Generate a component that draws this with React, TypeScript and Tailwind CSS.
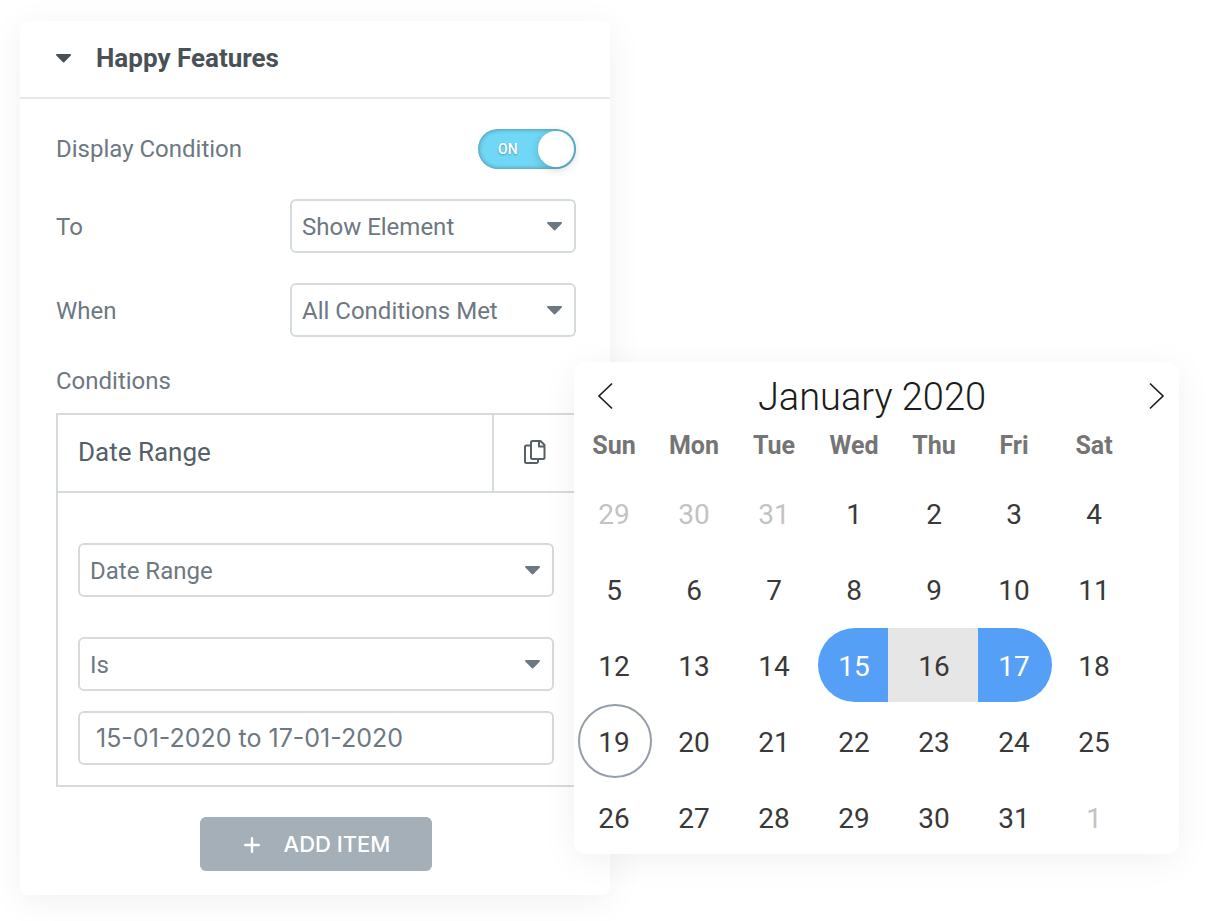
import React, { useState } from 'react';

const weekdays = ['Sun', 'Mon', 'Tue', 'Wed', 'Thu', 'Fri', 'Sat'];

// 29 Dec 2019 to 1 Feb 2020
const days = Array.from({ length: 35 }, (_, i) => new Date(2019, 11, 29 + i));

const Caret: React.FC<{ className?: string }> = ({ className = '' }) => (
  <svg className={`h-[9px] w-4 ${className}`} viewBox="0 0 16 9" fill="currentColor" aria-hidden="true">
    <path d="M.9 0h13.3c.7 0 1.1.9.6 1.4L8.5 8c-.5.6-1.3.6-1.8 0L.3 1.4C-.2.9.1 0 .9 0z" />
  </svg>
);

interface SelectProps {
  id: string;
  label: string;
  options: string[];
  className?: string;
}

const Select: React.FC<SelectProps> = ({ id, label, options, className = '' }) => (
  <div className={`relative ${className}`}>
    <select
      id={id}
      aria-label={label}
      className="h-[54px] w-full appearance-none rounded-md border-2 border-[#d5dadf] bg-white pt-0.5 pr-10 pl-2.5 text-2xl text-[#6d7882]"
    >
      {options.map((option) => (
        <option key={option}>{option}</option>
      ))}
    </select>
    <Caret className="pointer-events-none absolute top-[23px] right-[13px] text-[#6d7882]" />
  </div>
);

const Switch: React.FC = () => {
  const [on, setOn] = useState(true);

  return (
    <label className="relative block h-10 w-[98px] cursor-pointer">
      <input
        id="display-condition"
        type="checkbox"
        role="switch"
        checked={on}
        onChange={() => setOn(!on)}
        className="peer absolute inset-0 h-full w-full cursor-pointer appearance-none rounded-full bg-[#c2cbd2] shadow-[inset_0_0_5px_rgba(0,0,0,0.4)] checked:bg-[#71d7f7]"
      />
      <span className="pointer-events-none absolute inset-y-0 left-5 text-sm leading-10 font-medium text-white [text-shadow:0_1px_2px_rgba(0,0,0,0.3)]">
        {on ? 'ON' : ''}
      </span>
      <span className="pointer-events-none absolute top-0.5 left-0.5 h-9 w-9 rounded-full bg-white shadow-[0_2px_10px_rgba(0,0,0,0.2)] peer-checked:right-0.5 peer-checked:left-auto" />
    </label>
  );
};

const FeaturesPanel: React.FC = () => (
  <section className="min-w-0 flex-1 rounded-lg bg-white pb-6 shadow-[0_6px_36px_rgba(0,0,0,0.06)]">
    <button className="flex h-[78px] w-full items-center gap-6 border-b-2 border-[#e6e9ec] pb-0.5 pl-9 text-[26px] font-bold text-[#495157]">
      <Caret />
      <h2>Happy Features</h2>
    </button>

    <div className="pr-[34px] pl-9 text-2xl text-[#6d7882]">
      <div className="mt-[30px] flex items-center justify-between">
        <label htmlFor="display-condition">Display Condition</label>
        <Switch />
      </div>
      <div className="mt-[30px] flex items-center justify-between">
        <label htmlFor="to" className="pt-0.5">To</label>
        <Select id="to" label="To" options={['Show Element', 'Hide Element']} className="w-[286px]" />
      </div>
      <div className="mt-[30px] flex items-center justify-between">
        <label htmlFor="when" className="pt-0.5">When</label>
        <Select id="when" label="When" options={['All Conditions Met', 'Any Condition Met']} className="w-[286px]" />
      </div>

      <h3 className="mt-7">Conditions</h3>
      <div className="mt-4 border-2 border-[#d5dadf]">
        <div className="flex h-[78px] border-b-2 border-[#d5dadf] text-[26px] text-[#556068]">
          <button className="flex-1 border-r-2 border-[#d5dadf] pb-0.5 pl-5 text-left">Date Range</button>
          <button className="w-20 shrink-0 pb-0.5 pl-[30px]" aria-label="Duplicate">
            <svg className="h-6 w-[22px]" viewBox="0 0 22 24" fill="none" stroke="currentColor" strokeWidth="2" strokeLinejoin="round">
              <path d="M7 5.5H2.5A1.5 1.5 0 0 0 1 7v14.5A1.5 1.5 0 0 0 2.500 23h10a1.500 1.500 0 0 0 1.500-1.500V19" />
              <path d="M8.500 1H16.500L20.500 5V17.500A1.500 1.500 0 0 1 19 19H8.500A1.500 1.500 0 0 1 7 17.500V2.500A1.500 1.500 0 0 1 8.500 1z" />
              <path d="M15 1.500V6.500h5" />
            </svg>
          </button>
        </div>
        <div className="px-5 pt-[50px] pb-5">
          <Select id="type" label="Condition type" options={['Date Range', 'Date', 'Time']} />
          <Select id="operator" label="Operator" options={['Is', 'Is Not']} className="mt-10" />
          <input
            type="text"
            aria-label="Dates"
            defaultValue="15-01-2020 to 17-01-2020"
            className="mt-5 block h-[54px] w-full rounded-md border-2 border-[#d5dadf] px-4 font-[Inter] text-[25px] text-[#6d7882]"
          />
        </div>
      </div>

      <button className="mx-auto mt-[30px] flex h-[54px] w-[232px] items-center justify-center gap-6 rounded-md bg-[#a4afb7] pt-0.5 pl-0.5 font-[Inter] text-[22px] font-medium text-white">
        <svg className="h-4 w-4" viewBox="0 0 16 16" stroke="currentColor" strokeWidth="2.4" strokeLinecap="round" aria-hidden="true">
          <path d="M8 1.2v13.6M1.2 8h13.6" />
        </svg>
        ADD ITEM
      </button>
    </div>
  </section>
);

const dayClass = (date: Date) => {
  const day = date.getDate();
  if (date.getMonth() !== 0) return 'rounded-full text-[#c3c3c3]';
  if (day === 15) return 'rounded-l-full bg-[#569ff7] text-white';
  if (day === 16) return 'relative -mr-1.5 -ml-2.5 bg-[#e6e6e6] pl-0.5 text-[#393939]';
  if (day === 17) return 'rounded-r-full bg-[#569ff7] text-white';
  if (day === 19) return 'rounded-full border-2 border-[#959ea9] text-[#393939]';
  return 'rounded-full text-[#393939]';
};

const Calendar: React.FC = () => (
  <section className="relative mt-[341px] -ml-9 w-[605px] shrink-0 rounded-xl bg-white shadow-[0_6px_36px_rgba(0,0,0,0.06)]">
    <div className="flex h-[68px] items-center pr-3.5 pl-[23px] text-[#1b1b1b]">
      <button aria-label="Previous month">
        <svg className="h-7 w-4" viewBox="0 0 16 28" fill="none" stroke="currentColor" strokeWidth="1.6">
          <path d="M15 1.500L2 14l13 12.500" />
        </svg>
      </button>
      <h2 className="flex-1 pt-0.5 pr-[18px] text-center text-[38px] font-light">January 2020</h2>
      <button aria-label="Next month">
        <svg className="h-7 w-4" viewBox="0 0 16 28" fill="none" stroke="currentColor" strokeWidth="1.6">
          <path d="M1 1.500L14 14L1 26.500" />
        </svg>
      </button>
    </div>
    <div className="grid w-[558px] grid-cols-7 gap-x-1.5 pl-1 text-center text-[25px] leading-8 font-bold text-[#757575]">
      {weekdays.map((name) => (
        <span key={name} className="pr-0.5">{name}</span>
      ))}
    </div>
    <div className="mt-3.5 grid w-[558px] grid-cols-7 gap-x-1.5 gap-y-0.5 pl-1 text-[28px]">
      {days.map((date) => (
        <button key={date.getTime()} className={`h-[74px] pt-1 ${date.getDate() === 16 ? '' : 'pr-0.5'} ${dayClass(date)}`}>
          {date.getDate()}
        </button>
      ))}
    </div>
  </section>
);

const App: React.FC = () => (
  <main className="flex min-h-screen items-start bg-white pt-[21px] pr-[27px] pb-6 pl-5 font-[Roboto,sans-serif]">
    <FeaturesPanel />
    <Calendar />
  </main>
);

export default App;
